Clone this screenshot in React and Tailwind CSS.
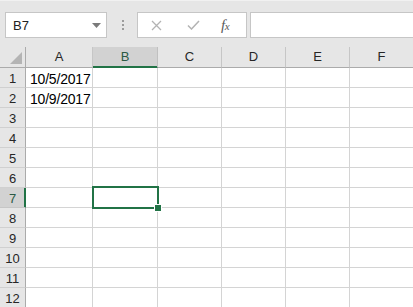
import React from "react";

const cols = [
  { key: "A", w: "w-[67px]" },
  { key: "B", w: "w-[65px]" },
  { key: "C", w: "w-[64px]" },
  { key: "D", w: "w-[64px]" },
  { key: "E", w: "w-[64px]" },
  { key: "F", w: "w-[64px]" },
];

const data = { "1-A": "10/5/2017", "2-A": "10/9/2017" };

export default function App() {
  const rows = [1, 2, 3, 4, 5, 6, 7, 8, 9, 10, 11, 12];
  return (
    <div className="w-[413px] h-[307px] overflow-hidden bg-white font-['Liberation_Sans',Arial,sans-serif] text-black">
      {/* Formula bar */}
      <div className="h-[47px] bg-[#e6e6e6] border-t border-[#f1f1f1] flex items-start pt-[11px]">
        <div className="ml-[5px] w-[102px] h-[26px] border border-[#c6c6c6] bg-white flex items-center justify-between pl-[7px] pr-[5px] shrink-0">
          <span className="text-[13px] leading-none text-[#222] pt-[1px]">B7</span>
          <svg width="9" height="5" viewBox="0 0 9 5" className="mt-[1px]">
            <polygon points="0,0 9,0 4.5,5" fill="#7a7a7a" />
          </svg>
        </div>
        <div className="ml-[15px] w-[2px] h-[26px] flex flex-col items-center justify-center gap-[2px] shrink-0">
          <div className="w-[2px] h-[2px] bg-[#9c9c9c]" />
          <div className="w-[2px] h-[2px] bg-[#9c9c9c]" />
          <div className="w-[2px] h-[2px] bg-[#9c9c9c]" />
        </div>
        <div className="ml-[13px] w-[110px] h-[26px] border border-[#c6c6c6] bg-white flex items-center shrink-0 relative">
          <svg width="11" height="11" viewBox="0 0 11 11" className="ml-[13px]">
            <path d="M1 1 L10 10 M10 1 L1 10" stroke="#b3b3b3" strokeWidth="1.3" fill="none" />
          </svg>
          <svg width="13" height="10" viewBox="0 0 13 10" className="ml-[25px]">
            <path d="M1 5.5 L4.5 9 L12 1" stroke="#b3b3b3" strokeWidth="1.5" fill="none" />
          </svg>
          <span className="ml-[21px] font-['Liberation_Serif',serif] italic text-[15px] leading-none text-[#5a5a5a] tracking-[-0.5px]">
            f<span className="text-[11px]">x</span>
          </span>
        </div>
        <div className="ml-[3px] flex-1 h-[26px] border border-r-0 border-[#c6c6c6] bg-white" />
      </div>

      {/* Column headers */}
      <div className="flex">
        <div className="w-[26px] h-[21px] shrink-0 bg-[#e6e6e6] border-r border-b border-[#ababab] relative">
          <svg width="12" height="12" viewBox="0 0 12 12" className="absolute left-[10px] top-[5px]">
            <polygon points="12,0 12,12 0,12" fill="#b4b4b4" />
          </svg>
        </div>
        {cols.map((c) =>
          c.key === "B" ? (
            <div
              key={c.key}
              className={`${c.w} h-[21px] shrink-0 bg-[#d2d2d2] border-r border-r-[#c0c0c0] border-b border-b-[#217346] shadow-[inset_0_-1px_0_#217346] flex items-center justify-center text-[13px] leading-[20px] text-[#2b5a44]`}
            >
              {c.key}
            </div>
          ) : (
            <div
              key={c.key}
              className={`${c.w} h-[21px] shrink-0 bg-[#e6e6e6] border-r border-r-[#c6c6c6] border-b border-b-[#ababab] flex items-center justify-center text-[13px] leading-[20px] text-[#262626]`}
            >
              {c.key}
            </div>
          )
        )}
      </div>

      {/* Rows */}
      {rows.map((r) => (
        <div key={r} className="flex">
          {r === 7 ? (
            <div className="w-[26px] h-[20px] shrink-0 bg-[#d2d2d2] border-r border-r-[#217346] shadow-[inset_-1px_0_0_#217346] border-b border-b-[#c6c6c6] flex items-center justify-center text-[13px] leading-[19px] pt-[1px] text-[#2b5a44]">
              {r}
            </div>
          ) : (
            <div className="w-[26px] h-[20px] shrink-0 bg-[#e6e6e6] border-r border-r-[#ababab] border-b border-b-[#d0d0d0] flex items-center justify-center text-[13px] leading-[19px] pt-[1px] text-[#262626]">
              {r}
            </div>
          )}
          {cols.map((c) => {
            const v = data[`${r}-${c.key}`];
            const sel = r === 7 && c.key === "B";
            return (
              <div
                key={c.key}
                className={`${c.w} h-[20px] shrink-0 bg-white border-r border-b border-[#d4d4d4] relative flex items-end pl-[4px]`}
              >
                {v && (
                  <span className="text-[14px] leading-[16px] tracking-[-0.2px] whitespace-nowrap">{v}</span>
                )}
                {sel && (
                  <>
                    <div className="absolute left-[-1px] top-[-2px] w-[67px] h-[23px] border-2 border-[#217346] z-10" />
                    <div className="absolute left-[61px] top-[16px] w-[8px] h-[8px] bg-[#217346] border border-white z-20" />
                  </>
                )}
              </div>
            );
          })}
        </div>
      ))}
    </div>
  );
}
